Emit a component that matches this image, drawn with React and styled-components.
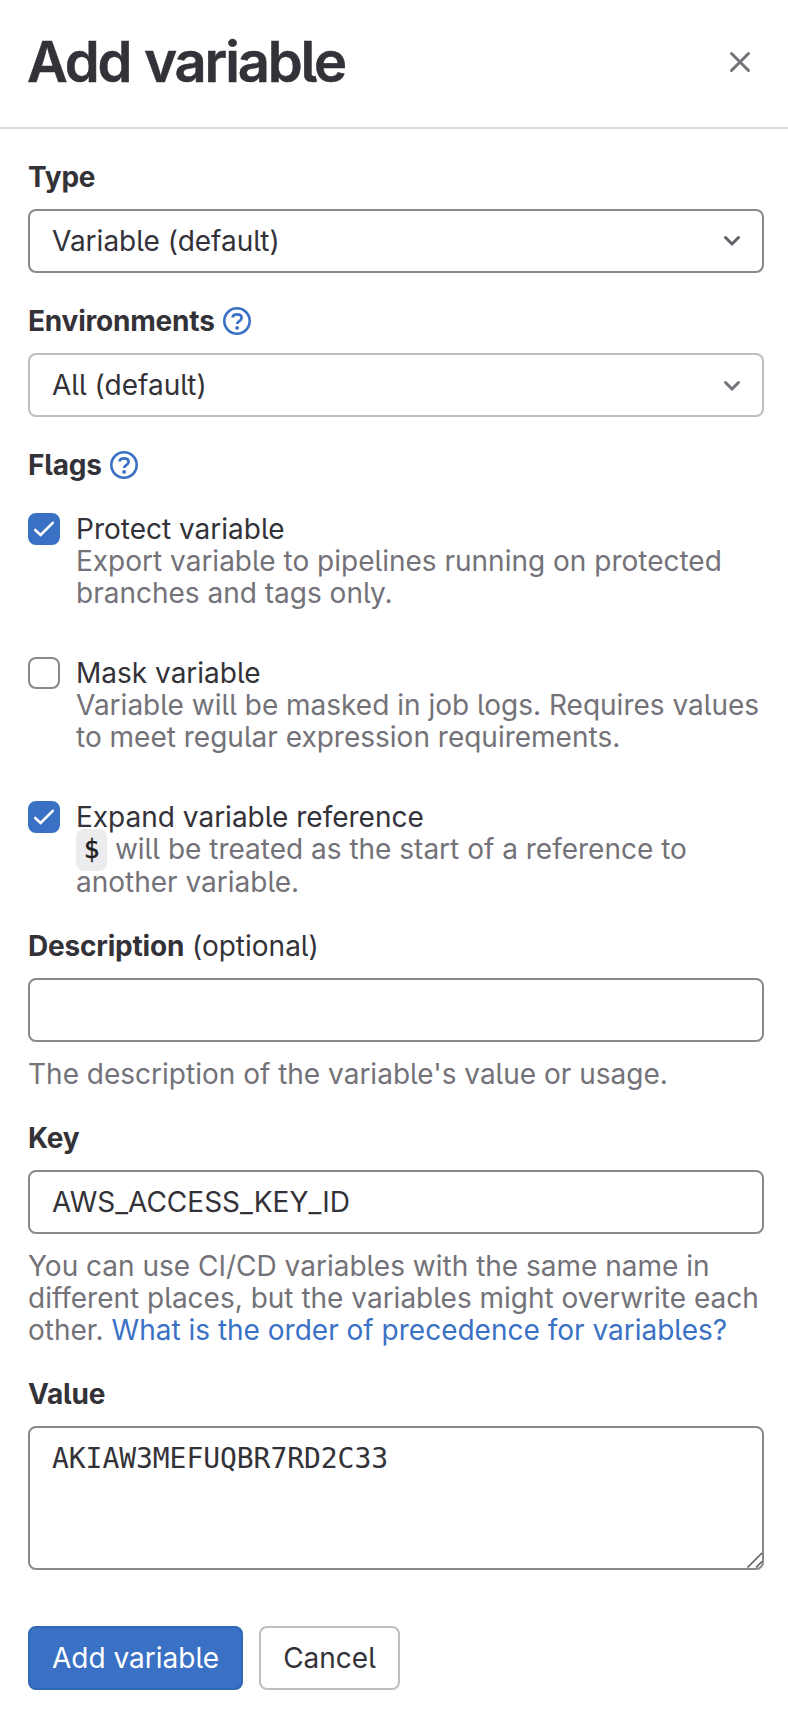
import React from "react";
import styled, { createGlobalStyle, css } from "styled-components";

const color = {
  text: "#333238",
  subtle: "#737278",
  link: "#3a71c5",
  blue: "#3a71c5",
  blueEdge: "#2f68b4",
  line: "#dcdcde",
  control: "#89888d",
  soft: "#bfbfc3",
};

const GlobalStyle = createGlobalStyle`
  *, *::before, *::after { box-sizing: border-box; }
  body {
    margin: 0;
    background: #fff;
    color: ${color.text};
    font: 400 28px/32px Inter, "Liberation Sans", sans-serif;
    font-feature-settings: "cv05";
  }
`;

const Drawer = styled.form`
  width: 100%;
  min-height: 1734px;
  background: #fff;
`;

const Header = styled.header`
  display: flex;
  align-items: center;
  justify-content: space-between;
  height: 129px;
  padding: 0 32px 4px 27px;
  border-bottom: 2px solid ${color.line};
`;

const Title = styled.h2`
  margin: 0;
  font-size: 56px;
  line-height: 64px;
  font-weight: 600;
  letter-spacing: -2.15px;
  word-spacing: 2px;
  -webkit-text-stroke: 0.5px ${color.text};
`;

const IconButton = styled.button`
  display: flex;
  padding: 0;
  border: 0;
  background: none;
  color: ${color.subtle};
`;

const Body = styled.div`
  display: flex;
  flex-direction: column;
  gap: 32px;
  padding: 32px 24px 0 28px;
`;

const Field = styled.div`
  display: flex;
  flex-direction: column;
  gap: 16px;
`;

const Label = styled.label`
  display: flex;
  align-items: center;
  height: 32px;
  font-weight: 700;
  letter-spacing: -0.2px;
  white-space: pre;
`;

const Optional = styled.span`
  font-weight: 400;
  letter-spacing: 0;
`;

const Help = styled.svg`
  margin-left: 8px;
  color: ${color.link};
`;

const controlBox = css`
  width: 100%;
  border: 2px solid ${(p) => (p.$soft ? color.soft : color.control)};
  border-radius: 8px;
  background: #fff;
  color: ${color.text};
`;

const Select = styled.button`
  ${controlBox}
  display: flex;
  align-items: center;
  justify-content: space-between;
  height: 64px;
  padding: 0 14px 0 22px;
  font: inherit;
  font-feature-settings: inherit;
`;

const Chevron = styled.svg`
  color: ${(p) => (p.$dark ? "#626168" : color.subtle)};
`;

const Input = styled.input`
  ${controlBox}
  height: 64px;
  padding: 0 22px;
  font: inherit;
  font-feature-settings: inherit;
  outline: none;
`;

const TextAreaWrap = styled.div`
  position: relative;
  display: flex;
`;

const TextArea = styled.textarea`
  ${controlBox}
  height: 144px;
  padding: 15px 22px 13px;
  font: 28px/32px "DejaVu Sans Mono", monospace;
  letter-spacing: -0.057px;
  resize: none;
  outline: none;
`;

const Grip = styled.svg`
  position: absolute;
  right: 1px;
  bottom: 1px;
  color: #5c5b60;
`;

const HelpText = styled.p`
  margin: 0;
  color: ${color.subtle};
`;

const Link = styled.a`
  color: ${color.link};
  text-decoration: none;
`;

const Flags = styled.div`
  display: flex;
  flex-direction: column;
  gap: 48px;
  padding-top: 16px;
`;

const Flag = styled.div`
  display: flex;
  gap: 16px;
`;

const Box = styled.span`
  display: flex;
  align-items: center;
  justify-content: center;
  flex: none;
  width: 32px;
  height: 32px;
  border: 2px solid ${(p) => (p.$checked ? color.blue : color.control)};
  border-radius: 8px;
  background: ${(p) => (p.$checked ? color.blue : "#fff")};
`;

const FlagText = styled.div`
  flex: 1;
  min-width: 0;
`;

const CodeStrut = styled.span`
  display: inline-block;
  height: 33px;
  vertical-align: -7px;
`;

const Code = styled.code`
  padding: 5px 7.7px 7px;
  border-radius: 8px;
  background: #ececef;
  color: #1f1e24;
  font: 26px/1 "DejaVu Sans Mono", monospace;
  -webkit-text-stroke: 0.5px #1f1e24;
  vertical-align: 1px;
`;

const Actions = styled.div`
  display: flex;
  gap: 16px;
  padding-top: 24px;
`;

const Button = styled.button`
  height: 64px;
  width: ${(p) => (p.$primary ? 215 : 141)}px;
  padding: 0;
  border: 2px solid ${(p) => (p.$primary ? color.blueEdge : color.soft)};
  border-radius: 8px;
  background: ${(p) => (p.$primary ? color.blue : "#fff")};
  color: ${(p) => (p.$primary ? "#fff" : color.text)};
  font: inherit;
  font-feature-settings: inherit;
`;

const HelpIcon = () => (
  <Help width="28" height="28" viewBox="0 0 28 28" fill="none" stroke="currentColor">
    <circle cx="14" cy="14" r="12.7" strokeWidth="2.6" />
    <path
      d="M9.4 10.6C9.8 8.3 11.7 7.3 14 7.3c2.6 0 4.6 1.4 4.6 3.7 0 3.3-4.4 2.9-4.4 5.9"
      strokeWidth="2.7"
    />
    <circle cx="14.1" cy="20.9" r="1.9" fill="currentColor" stroke="none" />
  </Help>
);

const ChevronIcon = ({ dark }) => (
  <Chevron $dark={dark} width="32" height="32" viewBox="0 0 32 32" fill="none" stroke="currentColor">
    <path
      d={dark ? "M9.5 12.5l6.5 6.5 6.5-6.5" : "M9.5 13.5l6.5 6.5 6.5-6.5"}
      strokeWidth="3"
      strokeLinecap="round"
    />
  </Chevron>
);

const Checkbox = ({ checked, label, children }) => (
  <Flag>
    <Box $checked={checked} role="checkbox" aria-checked={!!checked}>
      {checked && (
        <svg width="20" height="16" viewBox="0 0 20 16" fill="none" stroke="#fff">
          <path d="M1.2 9L6.6 14 18.8 1.8" strokeWidth="2.6" strokeLinecap="round" />
        </svg>
      )}
    </Box>
    <FlagText>
      {label}
      <HelpText>{children}</HelpText>
    </FlagText>
  </Flag>
);

export default function App() {
  return (
    <Drawer onSubmit={(e) => e.preventDefault()}>
      <GlobalStyle />
      <Header>
        <Title>Add variable</Title>
        <IconButton type="button" aria-label="Close">
          <svg width="32" height="32" viewBox="0 0 32 32" fill="none" stroke="currentColor">
            <path d="M7.5 7.5l17 17m0-17l-17 17" strokeWidth="3" strokeLinecap="round" />
          </svg>
        </IconButton>
      </Header>
      <Body>
        <Field>
          <Label>Type</Label>
          <Select type="button">
            Variable (default)
            <ChevronIcon dark />
          </Select>
        </Field>
        <Field>
          <Label>
            Environments
            <HelpIcon />
          </Label>
          <Select type="button" $soft>
            All (default)
            <ChevronIcon />
          </Select>
        </Field>
        <Field>
          <Label>
            Flags
            <HelpIcon />
          </Label>
          <Flags>
            <Checkbox checked label="Protect variable">
              Export variable to pipelines running on protected branches and tags only.
            </Checkbox>
            <Checkbox label="Mask variable">
              Variable will be masked in job logs. Requires values to meet regular expression
              requirements.
            </Checkbox>
            <Checkbox checked label="Expand variable reference">
              <CodeStrut />
              <Code>$</Code> will be treated as the start of a reference to another variable.
            </Checkbox>
          </Flags>
        </Field>
        <Field>
          <Label>
            Description<Optional> (optional)</Optional>
          </Label>
          <Input />
          <HelpText>The description of the variable's value or usage.</HelpText>
        </Field>
        <Field>
          <Label>Key</Label>
          <Input defaultValue="AWS_ACCESS_KEY_ID" />
          <HelpText>
            You can use CI/CD variables with the same name in different places, but the variables
            might overwrite each other.{" "}
            <Link href="#">What is the order of precedence for variables?</Link>
          </HelpText>
        </Field>
        <Field>
          <Label>Value</Label>
          <TextAreaWrap>
            <TextArea defaultValue="AKIAW3MEFUQBR7RD2C33" spellCheck={false} />
            <Grip width="17" height="17" viewBox="0 0 17 17" fill="none" stroke="currentColor">
              <path d="M1.5 15.5L16 1M10 15.5L16 9.5" strokeWidth="1.6" />
            </Grip>
          </TextAreaWrap>
        </Field>
        <Actions>
          <Button $primary type="submit">
            Add variable
          </Button>
          <Button type="button">Cancel</Button>
        </Actions>
      </Body>
    </Drawer>
  );
}
